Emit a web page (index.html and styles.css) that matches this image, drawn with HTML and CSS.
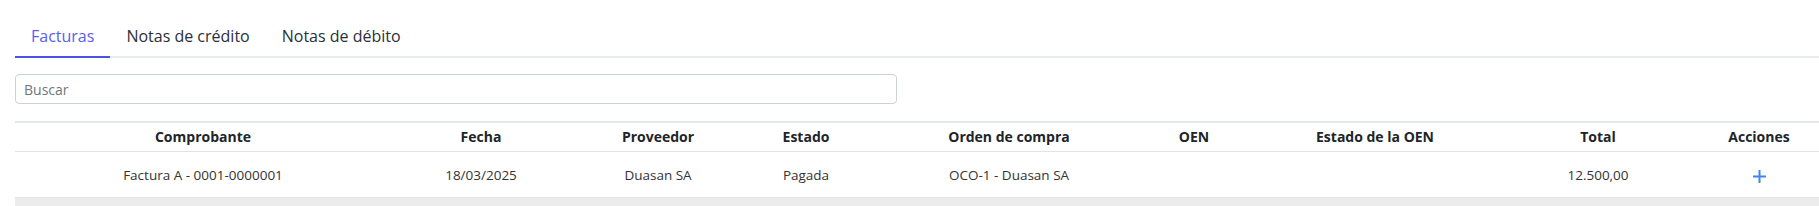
FILE: index.html
```html
<!DOCTYPE html>
<html lang="es">
<head>
<meta charset="utf-8">
<title>Facturas</title>
<link rel="stylesheet" href="styles.css">
</head>
<body>
<div class="page">
  <ul class="tabs">
    <li class="tab active">Facturas</li>
    <li class="tab">Notas de crédito</li>
    <li class="tab">Notas de débito</li>
  </ul>
  <input class="search" type="text" placeholder="Buscar">
  <table class="grid">
    <colgroup>
      <col style="width:376px">
      <col style="width:180px">
      <col style="width:174px">
      <col style="width:122px">
      <col style="width:284px">
      <col style="width:86px">
      <col style="width:276px">
      <col style="width:170px">
      <col style="width:152px">
    </colgroup>
    <thead>
      <tr>
        <th>Comprobante</th>
        <th>Fecha</th>
        <th>Proveedor</th>
        <th>Estado</th>
        <th>Orden de compra</th>
        <th>OEN</th>
        <th>Estado de la OEN</th>
        <th>Total</th>
        <th>Acciones</th>
      </tr>
    </thead>
    <tbody>
      <tr>
        <td>Factura A - 0001-0000001</td>
        <td>18/03/2025</td>
        <td>Duasan SA</td>
        <td>Pagada</td>
        <td>OCO-1 - Duasan SA</td>
        <td></td>
        <td></td>
        <td>12.500,00</td>
        <td><span class="add"><svg width="13" height="13" viewBox="0 0 13 13"><path d="M6.5 0v13M0 6.5h13" stroke="#3d84f5" stroke-width="2" fill="none"/></svg></span></td>
      </tr>
    </tbody>
  </table>
  <div class="footer-band"></div>
</div>
</body>
</html>
```

FILE: styles.css
```css
html, body {
  margin: 0;
  padding: 0;
  background: #ffffff;
  overflow: hidden;
}
body {
  font-family: "Open Sans", "Liberation Sans", sans-serif;
  color: #333333;
}
.page {
  width: 1820px;
  padding: 15px 0 0 15px;
}
.tabs {
  list-style: none;
  margin: 0;
  padding: 0;
  display: flex;
  border-bottom: 2px solid #e8ebf0;
}
.tab {
  padding: 9px 16px 8px;
  font-size: 16px;
  line-height: 24px;
  color: #2b3038;
  margin-bottom: -2px;
  border-bottom: 2px solid transparent;
}
.tab.active {
  color: #5860ee;
  border-bottom-color: #4a52e8;
}
.search {
  display: block;
  box-sizing: border-box;
  width: 882px;
  height: 30px;
  margin: 16px 0 17px;
  padding: 0 8px;
  border: 1px solid #cdd1d8;
  border-radius: 4px;
  font-family: "Open Sans", "Liberation Sans", sans-serif;
  font-size: 14px;
  color: #333;
}
.search::placeholder {
  color: #6f7680;
}
.grid {
  width: 1820px;
  table-layout: fixed;
  border-collapse: collapse;
  border-top: 2px solid #e3e6ea;
}
.grid th {
  font-size: 14px;
  font-weight: 700;
  line-height: 20px;
  padding: 4px 8px;
  color: #212529;
  text-align: center;
  border-bottom: 1px solid #e0e3e7;
}
.grid td {
  font-size: 13.5px;
  line-height: 20px;
  padding: 13px 8px 12px;
  color: #333333;
  text-align: center;
  border-bottom: 1px solid #e0e3e7;
}
.add {
  display: inline-flex;
  vertical-align: middle;
}
.footer-band {
  width: 1820px;
  height: 12px;
  background: #ececec;
}
```
